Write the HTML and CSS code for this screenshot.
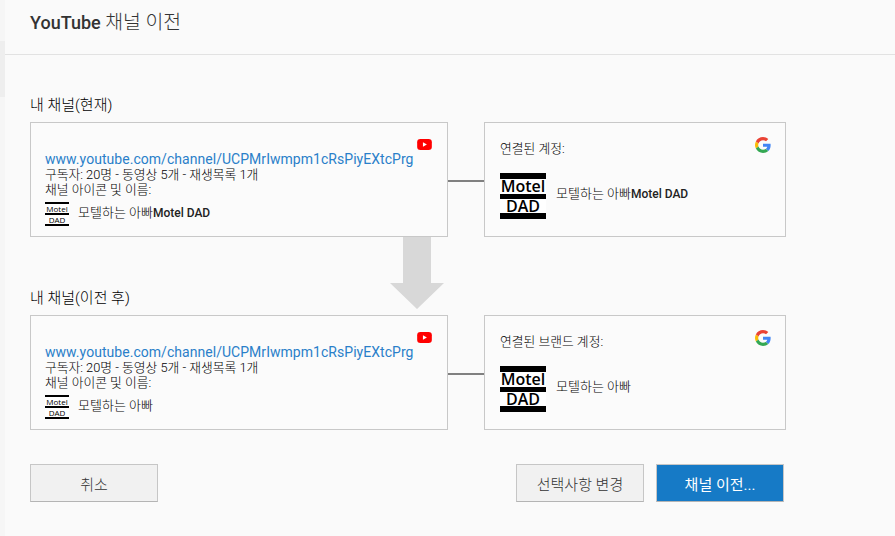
FILE: index.html
```html
<!DOCTYPE html>
<html lang="ko">
<head>
<meta charset="utf-8">
<title>YouTube 채널 이전</title>
<link rel="stylesheet" href="styles.css">
</head>
<body>
<div class="strip"><div class="strip-dark"></div></div>
<main class="page">
  <header class="head"><h1 class="title"><b>YouTube</b> <span class="title-ko">채널 이전</span></h1></header>
  <section class="content">
    <h2 class="label label-first">내 채널(현재)</h2>
    <div class="row">
      <div class="card card-left">
        <svg class="yt" viewBox="0 0 16 12"><rect width="16" height="12" rx="3.5" fill="#f00"/><path d="M6.300 3.600 10.600 6 6.300 8.400z" fill="#fff"/></svg>
        <a class="url">www.youtube.com/channel/UCPMrIwmpm1cRsPiyEXtcPrg</a>
        <p class="meta">구독자: 20명 - 동영상 5개 - 재생목록 1개</p>
        <p class="meta">채널 아이콘 및 이름:</p>
        <div class="chan">
          <div class="logo logo-s"><span>Motel</span><span>DAD</span></div>
          <span class="name">모텔하는 아빠<span class="latin">Motel DAD</span></span>
        </div>
      </div>
      <div class="link"></div>
      <div class="card card-right">
        <svg class="g" viewBox="0 0 48 48"><path fill="#EA4335" d="M24 9.500c3.500 0 6.700 1.300 9.100 3.500l6.800-6.800C35.800 2.400 30.300 0 24 0 14.600 0 6.500 5.400 2.600 13.200l7.900 6.200C12.400 13.700 17.700 9.500 24 9.500z"/><path fill="#4285F4" d="M46.900 24.500c0-1.600-.1-3.100-.4-4.500H24v9h12.900c-.6 3-2.200 5.500-4.700 7.200l7.700 6c4.500-4.200 7-10.300 7-17.700z"/><path fill="#FBBC05" d="M10.500 28.600c-.5-1.400-.8-3-.8-4.600s.3-3.200.8-4.600l-7.900-6.200C.9 16.500 0 20.100 0 24s.9 7.500 2.600 10.800l7.900-6.200z"/><path fill="#34A853" d="M24 48c6.500 0 11.900-2.100 15.900-5.800l-7.700-6c-2.200 1.400-4.900 2.300-8.200 2.300-6.300 0-11.600-4.200-13.500-9.900l-7.900 6.200C6.500 42.600 14.600 48 24 48z"/></svg>
        <p class="acct">연결된 계정:</p>
        <div class="chan chan-lg">
          <div class="logo logo-l"><span>Motel</span><span>DAD</span></div>
          <span class="name">모텔하는 아빠<span class="latin">Motel DAD</span></span>
        </div>
      </div>
    </div>
    <h2 class="label label-second">내 채널(이전 후)</h2>
    <div class="row">
      <div class="card card-left">
        <svg class="yt" viewBox="0 0 16 12"><rect width="16" height="12" rx="3.5" fill="#f00"/><path d="M6.300 3.600 10.600 6 6.300 8.400z" fill="#fff"/></svg>
        <a class="url">www.youtube.com/channel/UCPMrIwmpm1cRsPiyEXtcPrg</a>
        <p class="meta">구독자: 20명 - 동영상 5개 - 재생목록 1개</p>
        <p class="meta">채널 아이콘 및 이름:</p>
        <div class="chan">
          <div class="logo logo-s"><span>Motel</span><span>DAD</span></div>
          <span class="name">모텔하는 아빠</span>
        </div>
      </div>
      <div class="link"></div>
      <div class="card card-right">
        <svg class="g" viewBox="0 0 48 48"><path fill="#EA4335" d="M24 9.500c3.500 0 6.700 1.300 9.100 3.500l6.800-6.800C35.800 2.400 30.300 0 24 0 14.600 0 6.500 5.400 2.600 13.200l7.900 6.200C12.400 13.700 17.700 9.500 24 9.500z"/><path fill="#4285F4" d="M46.900 24.500c0-1.600-.1-3.100-.4-4.500H24v9h12.900c-.6 3-2.200 5.500-4.700 7.200l7.700 6c4.500-4.200 7-10.300 7-17.700z"/><path fill="#FBBC05" d="M10.500 28.600c-.5-1.400-.8-3-.8-4.600s.3-3.200.8-4.600l-7.900-6.200C.9 16.500 0 20.100 0 24s.9 7.500 2.600 10.800l7.900-6.200z"/><path fill="#34A853" d="M24 48c6.500 0 11.900-2.100 15.900-5.800l-7.700-6c-2.200 1.400-4.900 2.300-8.200 2.300-6.300 0-11.600-4.200-13.500-9.900l-7.900 6.200C6.500 42.600 14.600 48 24 48z"/></svg>
        <p class="acct">연결된 브랜드 계정:</p>
        <div class="chan chan-lg">
          <div class="logo logo-l"><span>Motel</span><span>DAD</span></div>
          <span class="name">모텔하는 아빠</span>
        </div>
      </div>
    </div>
    <svg class="arrow" viewBox="0 0 54 72"><path d="M13 0H41V46H54L27 72 0 46H13z" fill="#d8d8d8"/></svg>
    <div class="actions">
      <button class="btn">취소</button>
      <div class="actions-right">
        <button class="btn">선택사항 변경</button>
        <button class="btn btn-primary">채널 이전...</button>
      </div>
    </div>
  </section>
</main>
</body>
</html>
```

FILE: styles.css
```css
* { box-sizing: border-box; }
html, body { margin: 0; height: 100%; }
body {
  background: #fafafa;
  color: #111;
  font-family: Roboto, "Noto Sans CJK KR", sans-serif;
  font-size: 12px;
  display: flex;
  overflow: hidden;
}
.strip { width: 5px; flex: none; background: #f6f6f6; padding-top: 41px; }
.strip-dark { height: 56px; background: #eeeeee; }
.page { flex: 1; min-width: 0; }
.head { height: 55px; border-bottom: 1px solid #e2e2e2; padding: 11px 0 0 25px; }
.title { margin: 0; font-size: 18px; line-height: 24px; font-weight: 400; color: #333; }
.title b { font-weight: 500; }
.title-ko { font-size: 19.4px; font-weight: 300; }
.content { position: relative; padding-left: 25px; }
.label { margin: 0; font-size: 15px; line-height: 18px; font-weight: 300; color: #000; }
.label-first { padding-top: 41px; padding-bottom: 8px; }
.label-second { padding-top: 52px; padding-bottom: 8px; }
.row { display: flex; align-items: center; height: 115px; }
.card { position: relative; height: 115px; border: 1px solid #c8c8c8; background: #fbfbfb; }
.card-left { width: 418px; padding: 29px 0 0 14px; }
.card-right { width: 302px; padding: 18px 0 0 15px; }
.link { width: 36px; height: 2px; margin-top: 2px; background: #808080; }
.yt { position: absolute; top: 16px; right: 15px; width: 15px; height: 11px; }
.g { position: absolute; top: 14px; right: 14px; width: 16px; height: 16px; }
.url { display: block; font-size: 14px; letter-spacing: .04px; line-height: 15px; color: #2a7fc9; }
.meta { margin: 0; font-size: 12.8px; line-height: 15px; font-weight: 300; color: #000; }
.acct { margin: 0; font-size: 12.8px; line-height: 16px; font-weight: 300; color: #000; }
.chan { display: flex; align-items: center; gap: 9px; margin-top: 5px; }
.chan .name { padding-bottom: 2px; }
.chan-lg { margin-top: 16px; gap: 10px; }
.chan-lg .name { padding-bottom: 5px; }
.name { font-size: 13px; line-height: 16px; font-weight: 300; color: #000; }
.latin { font-size: 12px; font-weight: 500; color: #222; }
.logo {
  flex: none;
  display: flex;
  flex-direction: column;
  background: #fff;
  color: #000;
  font-family: "Open Sans", sans-serif;
  border-style: solid;
  border-color: #000;
}
.logo span { display: block; text-align: center; }
.logo span:first-child { border-bottom-style: solid; border-bottom-color: #000; }
.logo-s { width: 24px; height: 24px; border-width: 2px 0; font-size: 8px; }
.logo-s span { height: 9px; line-height: 10px; }
.logo-s span:first-child { height: 11px; line-height: 9px; border-bottom-width: 2px; }
.logo-l { width: 46px; height: 46px; border-width: 6px 0; font-size: 16px; font-weight: 600; }
.logo-l span { height: 14px; line-height: 14px; }
.logo-l span:first-child { height: 20px; line-height: 15px; border-bottom-width: 5px; }
.arrow { position: absolute; left: 385px; top: 182px; width: 54px; height: 72px; }
.actions { display: flex; justify-content: space-between; width: 754px; margin-top: 34px; }
.actions-right { display: flex; gap: 12px; }
.btn {
  width: 128px;
  height: 38px;
  border: 1px solid #c6c6c6;
  border-bottom-color: #b4b4b4;
  background: #f1f1f1;
  color: #333;
  font-family: inherit;
  font-size: 15px;
  font-weight: 300;
}
.btn-primary { background: #167ac6; color: #fff; font-weight: 400; }
```
